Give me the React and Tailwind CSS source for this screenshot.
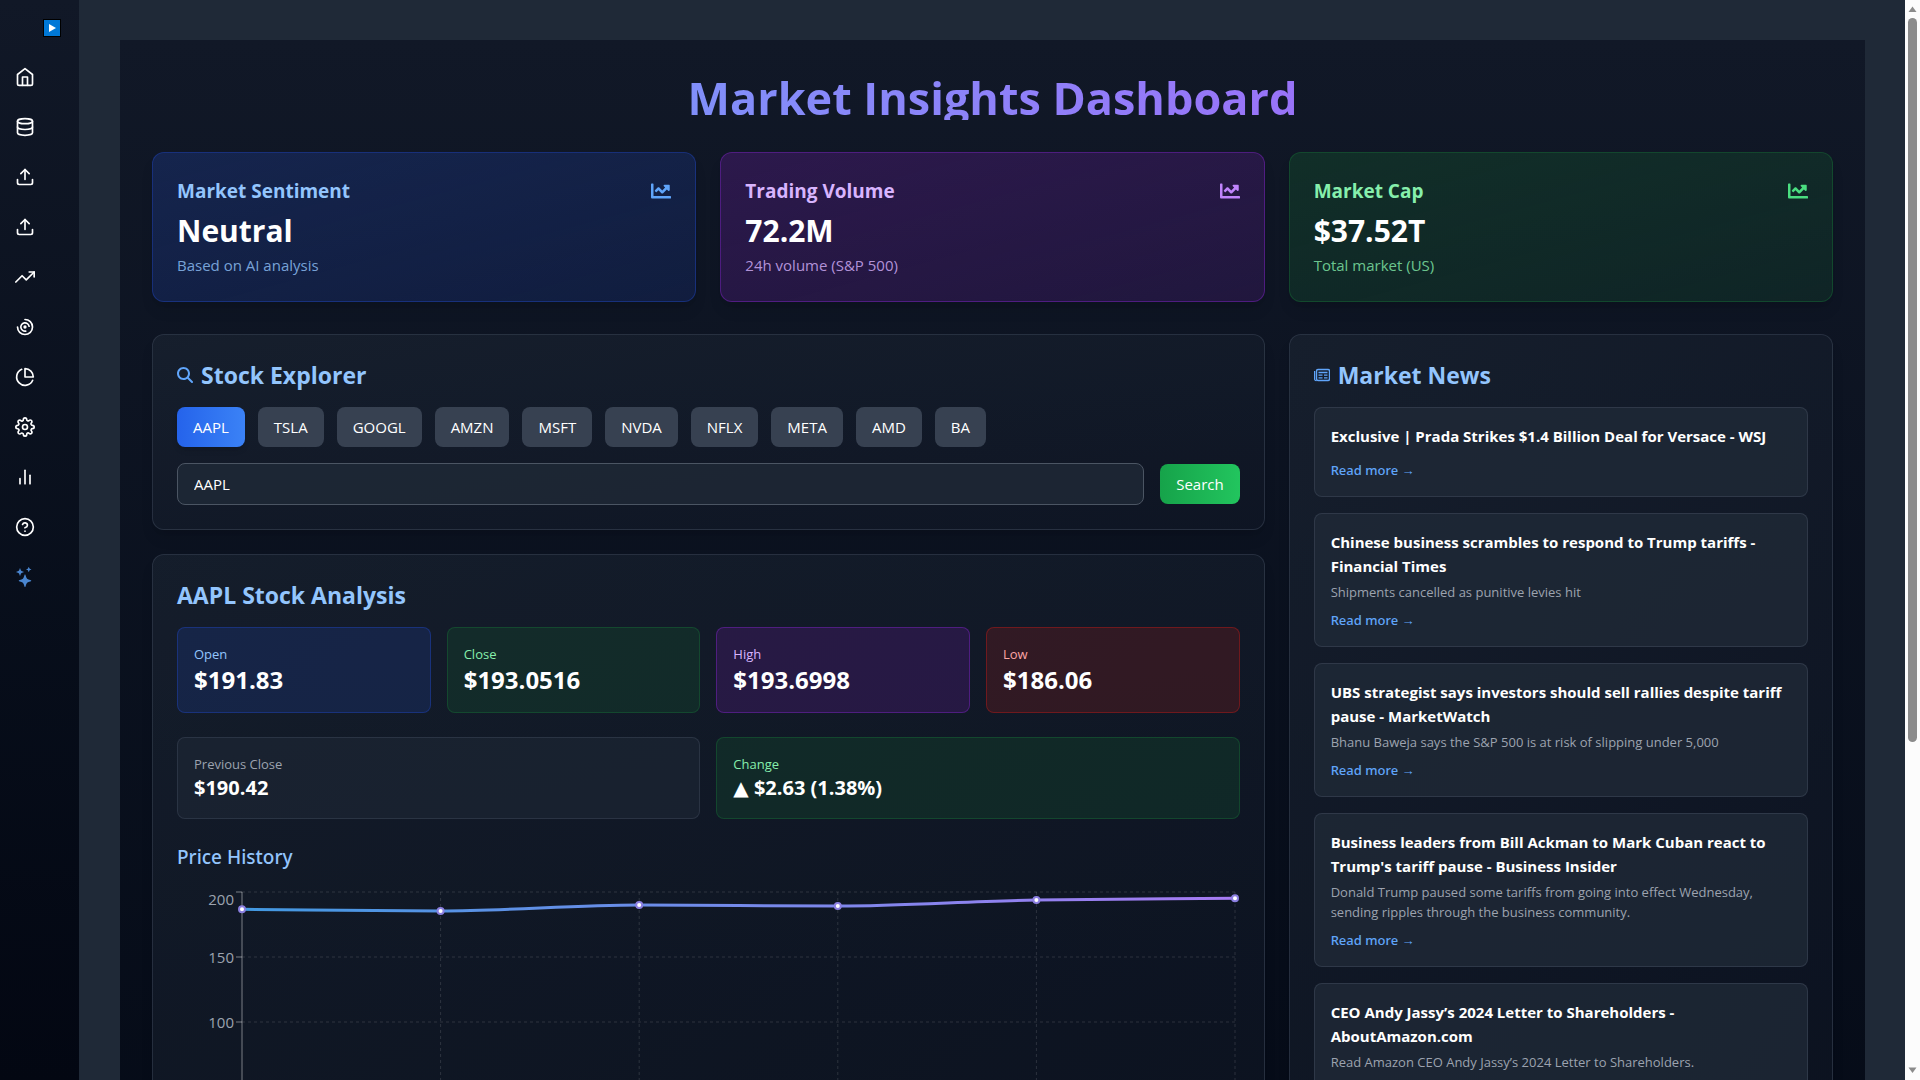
import React, { useLayoutEffect, useRef, useState } from "react";
import {
  FiHome,
  FiDatabase,
  FiUpload,
  FiTrendingUp,
  FiPieChart,
  FiSettings,
  FiBarChart2,
  FiHelpCircle,
} from "react-icons/fi";
import { TbChartArcs } from "react-icons/tb";
import { BsStars } from "react-icons/bs";
import { FaChartLine } from "react-icons/fa";
import { FaMagnifyingGlass } from "react-icons/fa6";

const NAV = [
  { label: "Home", Icon: FiHome },
  { label: "Data", Icon: FiDatabase },
  { label: "Upload", Icon: FiUpload },
  { label: "Import", Icon: FiUpload },
  { label: "Trends", Icon: FiTrendingUp },
  { label: "Analysis", Icon: TbChartArcs },
  { label: "Charts", Icon: FiPieChart },
  { label: "Settings", Icon: FiSettings },
  { label: "Reports", Icon: FiBarChart2 },
  { label: "Help", Icon: FiHelpCircle },
  { label: "Assistant", Icon: BsStars, color: "text-[#4a86d0]" },
];

const SUMMARY = [
  {
    title: "Market Sentiment",
    value: "Neutral",
    note: "Based on AI analysis",
    card: "border-[#1e40af]/50 from-[#1e3a8a]/40 to-[#1e40af]/20",
    heading: "text-[#93c5fd]",
    icon: "text-[#60a5fa]",
    sub: "text-[#93c5fd]/80",
  },
  {
    title: "Trading Volume",
    value: "72.2M",
    note: "24h volume (S&P 500)",
    card: "border-[#6b21a8]/60 from-[#581c87]/40 to-[#6b21a8]/20",
    heading: "text-[#d8b4fe]",
    icon: "text-[#c084fc]",
    sub: "text-[#d8b4fe]/80",
  },
  {
    title: "Market Cap",
    value: "$37.52T",
    note: "Total market (US)",
    card: "border-[#166534]/50 from-[#14532d]/40 to-[#166534]/20",
    heading: "text-[#86efac]",
    icon: "text-[#4ade80]",
    sub: "text-[#86efac]/80",
  },
];

const TICKERS = ["AAPL", "TSLA", "GOOGL", "AMZN", "MSFT", "NVDA", "NFLX", "META", "AMD", "BA"];

const STATS = [
  { label: "Open", value: "$191.83", box: "bg-[#1e3a8a]/30 border-[#1e40af]/50", text: "text-[#93c5fd]" },
  { label: "Close", value: "$193.0516", box: "bg-[#14532d]/30 border-[#166534]/50", text: "text-[#86efac]" },
  { label: "High", value: "$193.6998", box: "bg-[#581c87]/30 border-[#6b21a8]/60", text: "text-[#d8b4fe]" },
  { label: "Low", value: "$186.06", box: "bg-[#7f1d1d]/30 border-[#991b1b]/60", text: "text-[#fca5a5]" },
];

const NEWS = [
  { title: "Exclusive | Prada Strikes $1.4 Billion Deal for Versace - WSJ", text: "" },
  {
    title: "Chinese business scrambles to respond to Trump tariffs - Financial Times",
    text: "Shipments cancelled as punitive levies hit",
  },
  {
    title: "UBS strategist says investors should sell rallies despite tariff pause - MarketWatch",
    text: "Bhanu Baweja says the S&P 500 is at risk of slipping under 5,000",
  },
  {
    title: "Business leaders from Bill Ackman to Mark Cuban react to Trump's tariff pause - Business Insider",
    text: "Donald Trump paused some tariffs from going into effect Wednesday, sending ripples through the business community.",
  },
  {
    title: "CEO Andy Jassy’s 2024 Letter to Shareholders - AboutAmazon.com",
    text: "Read Amazon CEO Andy Jassy’s 2024 Letter to Shareholders.",
  },
];

const PRICES = [186.7, 185.4, 190, 189.2, 193.8, 195.2];

const PANEL =
  "rounded-xl border border-[#374151]/60 bg-linear-to-br from-[#1f2937]/50 to-[#111827]/50 p-6 shadow-lg";

const HEADING = "mb-4 flex items-center gap-2 text-[23px] leading-8 font-bold text-[#93c5fd]";

function Sidebar() {
  return (
    <aside className="flex w-20 shrink-0 flex-col border-r border-[#1f2937] bg-linear-to-b from-[#111827] to-[#030712]">
      <div className="flex justify-end px-[18px] pt-[19px]">
        <button type="button" aria-label="Expand menu" className="block">
          <svg width="18" height="18" viewBox="0 0 18 18">
            <rect width="18" height="18" fill="#000" />
            <rect x="1" y="1" width="16" height="16" fill="#0078d7" />
            <path d="M6 5 L13 9 L6 13 Z" fill="#fff" />
          </svg>
        </button>
      </div>
      <nav className="mt-[30px] flex flex-col items-start gap-[30px] pl-[15px]">
        {NAV.map(({ label, Icon, color }) => (
          <a key={label} href="#" aria-label={label} className={color || "text-white"}>
            <Icon size={20} />
          </a>
        ))}
      </nav>
    </aside>
  );
}

function SummaryCard({ item }) {
  return (
    <section className={"rounded-xl border bg-linear-to-br p-6 shadow-lg " + item.card}>
      <div className="mb-2 flex items-center justify-between">
        <h3 className={"text-[19px] leading-7 font-bold " + item.heading}>{item.title}</h3>
        <FaChartLine size={20} className={item.icon} />
      </div>
      <p className="text-3xl leading-9 font-bold text-white">{item.value}</p>
      <p className={"mt-1 text-[15px] leading-6 " + item.sub}>{item.note}</p>
    </section>
  );
}

function StockExplorer() {
  const [symbol, setSymbol] = useState("AAPL");
  return (
    <section className={PANEL}>
      <h2 className={HEADING}>
        <FaMagnifyingGlass size={16} className="text-[#60a5fa]" />
        Stock Explorer
      </h2>
      <div className="mb-4 flex flex-wrap gap-[13px]">
        {TICKERS.map((t) => (
          <button
            key={t}
            type="button"
            onClick={() => setSymbol(t)}
            className={
              "rounded-lg px-4 py-2 text-[15px] leading-6 text-white " +
              (t === symbol ? "bg-linear-to-r from-[#2563eb] to-[#3b82f6] shadow-md" : "bg-[#374151]")
            }
          >
            {t}
          </button>
        ))}
      </div>
      <div className="flex items-center gap-4">
        <input
          aria-label="Stock symbol"
          value={symbol}
          onChange={(e) => setSymbol(e.target.value)}
          className="min-w-0 flex-1 rounded-lg border border-[#4b5563] bg-[#1f2937]/80 px-4 py-2 text-[15px] leading-6 text-white outline-none"
        />
        <button
          type="button"
          className="rounded-lg bg-linear-to-r from-[#16a34a] to-[#22c55e] px-4 py-2 text-[15px] leading-6 text-white"
        >
          Search
        </button>
      </div>
    </section>
  );
}

/* Monotone cubic path through evenly spaced points. */
function monotonePath(pts) {
  const n = pts.length;
  const slopes = pts.slice(1).map((p, i) => (p[1] - pts[i][1]) / (p[0] - pts[i][0]));
  const tangents = pts.map((_, i) => {
    if (i === 0) return slopes[0];
    if (i === n - 1) return slopes[n - 2];
    const a = slopes[i - 1];
    const b = slopes[i];
    return a * b <= 0 ? 0 : (2 * a * b) / (a + b);
  });
  let d = "M" + pts[0].join(",");
  for (let i = 1; i < n; i++) {
    const dx = (pts[i][0] - pts[i - 1][0]) / 3;
    d +=
      "C" +
      [
        pts[i - 1][0] + dx,
        pts[i - 1][1] + dx * tangents[i - 1],
        pts[i][0] - dx,
        pts[i][1] - dx * tangents[i],
        pts[i][0],
        pts[i][1],
      ].join(",");
  }
  return d;
}

function PriceChart() {
  const box = useRef(null);
  const [width, setWidth] = useState(1063);
  useLayoutEffect(() => {
    const measure = () => setWidth(box.current.clientWidth);
    measure();
    const watcher = new ResizeObserver(measure);
    watcher.observe(box.current);
    return () => watcher.disconnect();
  }, []);

  const left = 65;
  const right = width - 5;
  const top = 5;
  const bottom = 265;
  const x = (i) => left + ((right - left) * i) / (PRICES.length - 1);
  const y = (v) => bottom - ((bottom - top) * v) / 200;
  const pts = PRICES.map((v, i) => [x(i), y(v)]);

  return (
    <div ref={box} className="h-[300px] w-full">
      <svg width={width} height="300" role="img" aria-label="Price history line chart">
        <defs>
          <linearGradient id="price" x1={left} x2={right} y1="0" y2="0" gradientUnits="userSpaceOnUse">
            <stop offset="0" stopColor="#4299e1" />
            <stop offset="1" stopColor="#a77bf3" />
          </linearGradient>
        </defs>
        <g stroke="#fff" strokeOpacity="0.13" strokeDasharray="3 3">
          {[50, 100, 150, 200].map((v) => (
            <line key={v} x1={left} x2={right} y1={y(v)} y2={y(v)} />
          ))}
          {PRICES.slice(1).map((_, i) => (
            <line key={i} x1={x(i + 1)} x2={x(i + 1)} y1={top} y2={bottom} />
          ))}
        </g>
        <g stroke="#fff" strokeOpacity="0.45">
          <line x1={left} x2={left} y1={top} y2={bottom} />
          <line x1={left} x2={right} y1={bottom} y2={bottom} />
          {[0, 50, 100, 150, 200].map((v) => (
            <line key={v} x1={left - 6} x2={left} y1={y(v)} y2={y(v)} />
          ))}
        </g>
        <g fill="#9ca3af" fontSize="15" textAnchor="end">
          {[0, 50, 100, 150, 200].map((v) => (
            <text key={v} x={left - 8} y={y(v) + (v === 200 ? 13 : 6)}>
              {v}
            </text>
          ))}
        </g>
        <path d={monotonePath(pts)} fill="none" stroke="url(#price)" strokeWidth="3" />
        {pts.map(([cx, cy], i) => (
          <circle key={i} cx={cx} cy={cy} r="3" fill="#fff" stroke="#8b7fe0" strokeWidth="2" />
        ))}
      </svg>
    </div>
  );
}

function StockAnalysis() {
  return (
    <section className={PANEL}>
      <h2 className={HEADING}>AAPL Stock Analysis</h2>
      <div className="mb-6 grid grid-cols-4 gap-4">
        {STATS.map((s) => (
          <div key={s.label} className={"rounded-lg border p-4 " + s.box}>
            <p className={"text-[13px] leading-5 " + s.text}>{s.label}</p>
            <p className="text-2xl leading-8 font-bold text-white">{s.value}</p>
          </div>
        ))}
      </div>
      <div className="mb-6 grid grid-cols-2 gap-4">
        <div className="rounded-lg border border-[#374151]/60 bg-[#1f2937]/50 p-4">
          <p className="text-[13px] leading-5 text-[#9ca3af]">Previous Close</p>
          <p className="text-xl leading-7 font-bold text-white">$190.42</p>
        </div>
        <div className="rounded-lg border border-[#166534]/50 bg-[#14532d]/30 p-4">
          <p className="text-[13px] leading-5 text-[#86efac]">Change</p>
          <p className="text-xl leading-7 font-bold text-white">
            <span className="font-['DejaVu_Sans'] font-normal">▲</span> $2.63 (1.38%)
          </p>
        </div>
      </div>
      <h3 className="mb-4 font-['Noto_Sans'] text-[19px] leading-7 font-medium text-[#93c5fd]">Price History</h3>
      <PriceChart />
    </section>
  );
}

function NewspaperIcon() {
  return (
    <svg width="16" height="16" viewBox="0 0 16 16" fill="none" stroke="#60a5fa" aria-hidden="true">
      <rect x="2.5" y="2.5" width="13" height="11" rx="1.5" strokeWidth="1.4" />
      <path d="M0.6 4v8a1.5 1.5 0 0 0 2 1.5" strokeWidth="1.2" />
      <path d="M4.5 5.5h9M4.5 8.2h4M10 8.2h3.5M4.5 10.8h4M10 10.8h3.5" strokeWidth="1.3" />
    </svg>
  );
}

function MarketNews() {
  return (
    <section className={PANEL}>
      <h2 className={HEADING}>
        <NewspaperIcon />
        Market News
      </h2>
      <div className="flex flex-col gap-4">
        {NEWS.map((n) => (
          <article
            key={n.title}
            className="flex flex-col items-start rounded-lg border border-[#374151]/70 bg-[#1f2937]/80 p-4"
          >
            <h3 className="text-[15px] leading-6 font-bold text-white">{n.title}</h3>
            <p className="mt-1 text-[13px] leading-5 text-[#9ca3af]">{n.text}</p>
            <a href="#" className="mt-2 font-['Noto_Sans'] text-[13px] leading-5 font-medium text-[#60a5fa]">
              Read more →
            </a>
          </article>
        ))}
      </div>
    </section>
  );
}

function Scrollbar() {
  return (
    <div
      aria-hidden="true"
      className="flex w-[15px] shrink-0 flex-col items-center justify-between bg-[#fcfcfc] py-[6px]"
    >
      <svg width="9" height="7" viewBox="0 0 9 7">
        <path d="M4.5 0.5 L8.5 6 H0.5 Z" fill="#8b8b8b" />
      </svg>
      <div className="mt-[5px] w-[9px] flex-1">
        <div className="h-[69%] rounded-full bg-[#8b8b8b]" />
      </div>
      <svg width="9" height="7" viewBox="0 0 9 7">
        <path d="M4.5 6 L8.5 0.5 H0.5 Z" fill="#8b8b8b" />
      </svg>
    </div>
  );
}

export default function App() {
  return (
    <div className="flex h-screen overflow-hidden bg-[#1f2937] font-['Open_Sans','Noto_Sans',sans-serif] text-white">
      <Sidebar />
      <main className="min-w-0 flex-1 overflow-hidden p-10">
        <div className="min-h-[140vh] bg-linear-to-b from-[#111827] to-[#030712] p-8">
          <h1 className="mb-8 h-12 bg-linear-to-r from-[#60a5fa] to-[#a855f7] bg-clip-text text-center text-[45px] leading-[52px] font-bold text-transparent">
            Market Insights Dashboard
          </h1>
          <div className="mb-8 grid grid-cols-3 gap-6">
            {SUMMARY.map((s) => (
              <SummaryCard key={s.title} item={s} />
            ))}
          </div>
          <div className="grid grid-cols-3 gap-6">
            <div className="col-span-2 flex flex-col gap-6">
              <StockExplorer />
              <StockAnalysis />
            </div>
            <MarketNews />
          </div>
        </div>
      </main>
      <Scrollbar />
    </div>
  );
}
